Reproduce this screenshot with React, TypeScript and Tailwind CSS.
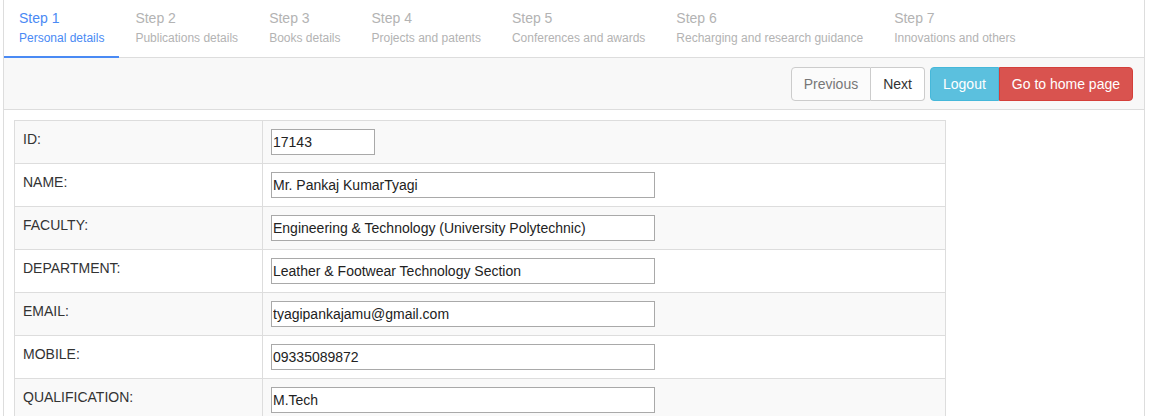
import React from "react";

const steps = [
  ["Step 1", "Personal details"],
  ["Step 2", "Publications details"],
  ["Step 3", "Books details"],
  ["Step 4", "Projects and patents"],
  ["Step 5", "Conferences and awards"],
  ["Step 6", "Recharging and research guidance"],
  ["Step 7", "Innovations and others"],
];

const rows: [string, string, number][] = [
  ["ID:", "17143", 104],
  ["NAME:", "Mr. Pankaj KumarTyagi", 384],
  ["FACULTY:", "Engineering & Technology (University Polytechnic)", 384],
  ["DEPARTMENT:", "Leather & Footwear Technology Section", 384],
  ["EMAIL:", "tyagipankajamu@gmail.com", 384],
  ["MOBILE:", "09335089872", 384],
  ["QUALIFICATION:", "M.Tech", 384],
];

export default function App() {
  return (
    <div className="min-h-[416px] bg-white" style={{ fontFamily: '"Liberation Sans", Arial, sans-serif' }}>
      <div className="ml-[3px] w-[1142px] border-x border-[#ddd] min-h-[416px]">
        <div className="flex h-[58px] border-b border-[#ddd]">
          {steps.map(([s, d], i) => (
            <div
              key={s}
              className={
                "px-[15px] mr-[1px] pt-[8px] h-[58px] " +
                (i === 0 ? "border-b-2 border-[#4a8af4] text-[#4a8af4]" : "text-[#b3b3b3]")
              }
            >
              <div className="text-[14px] leading-[20px]">{s}</div>
              <div className="text-[12px] leading-[20px]">{d}</div>
            </div>
          ))}
        </div>
        <div className="flex justify-end items-start h-[52px] bg-[#f8f8f8] border-b border-[#ddd] pt-[9px] pr-[11px]">
          <div className="flex h-[34px] text-[14px]">
            <button className="h-[34px] px-[12px] border border-[#ccc] rounded-l-[4px] bg-[#fbfbfb] text-[#777]">Previous</button>
            <button className="h-[34px] px-[12px] border border-l-0 border-[#ccc] rounded-r-[4px] bg-white text-[#333]">Next</button>
          </div>
          <div className="flex h-[34px] ml-[5px] text-[14px] text-white">
            <button className="h-[34px] px-[12px] border border-[#46b8da] rounded-l-[4px] bg-[#5bc0de]">Logout</button>
            <button className="h-[34px] px-[12px] border border-[#d43f3a] rounded-r-[4px] bg-[#d9534f]">Go to home page</button>
          </div>
        </div>
        <div className="pl-[10px] pt-[10px]">
          <table className="w-[932px] border-collapse text-[14px] text-[#333]">
            <tbody>
              {rows.map(([l, v, w], i) => (
                <tr key={l} className={i % 2 === 0 ? "bg-[#f9f9f9]" : "bg-white"}>
                  <td className="w-[248px] border border-[#ddd] p-[8px] align-top leading-[20px]">{l}</td>
                  <td className="border border-[#ddd] p-[8px] align-top">
                    <input
                      readOnly
                      value={v}
                      className="block h-[26px] border border-[#a9a9a9] bg-white px-[1px] text-[14px] text-[#222] outline-none"
                      style={{ width: w, fontFamily: '"Liberation Sans", Arial, sans-serif' }}
                    />
                  </td>
                </tr>
              ))}
            </tbody>
          </table>
        </div>
      </div>
    </div>
  );
}
